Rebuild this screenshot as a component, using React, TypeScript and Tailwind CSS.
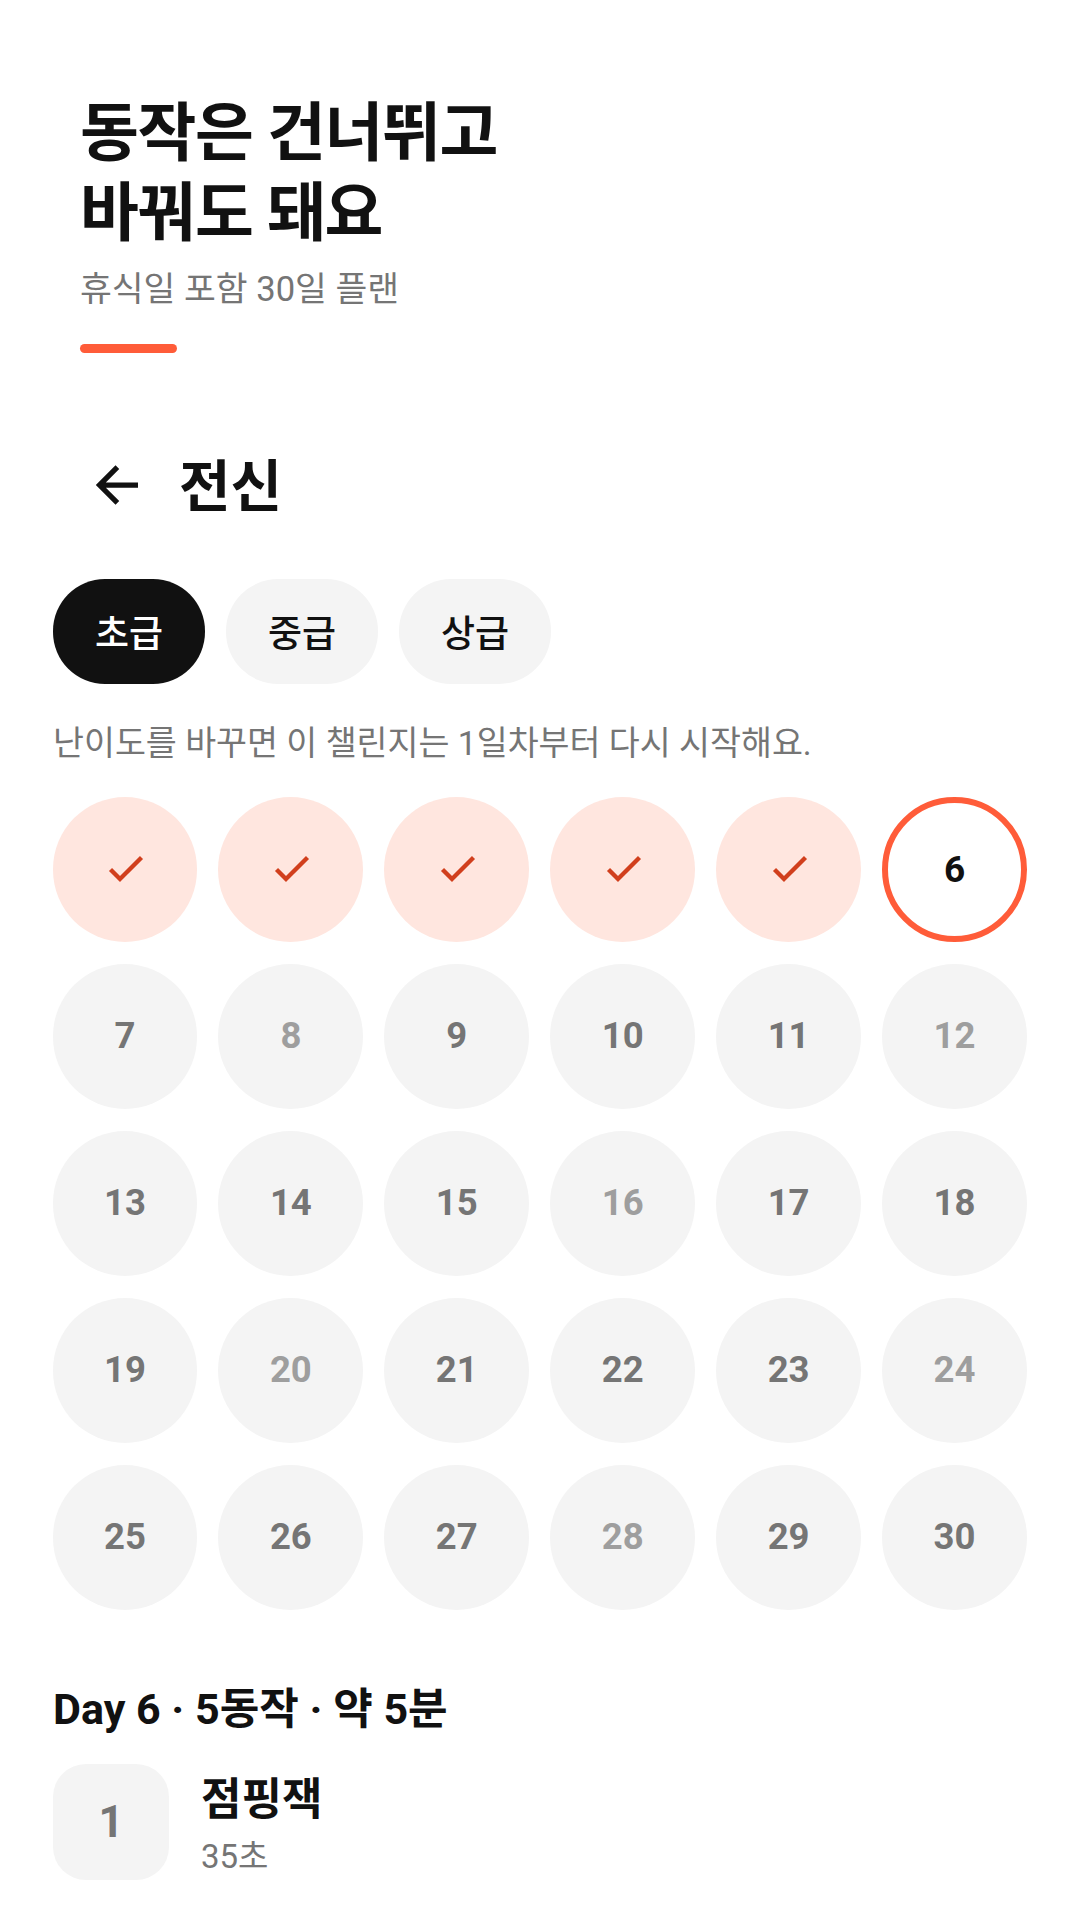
const FONT = "font-['Roboto','Noto_Sans_CJK_KR',sans-serif]";

const muted = new Set([8, 12, 16, 20, 24, 28]);

function DayCell({ day }: { day: number }) {
  if (day <= 5) {
    return (
      <div className="flex aspect-square w-full items-center justify-center rounded-full bg-[#ffe6df]">
        <svg width="44" height="44" viewBox="0 0 44 44" fill="none">
          <path d="M7.5 22.5 L17 32 L38.5 10.5" stroke="#d13f1d" strokeWidth="4.3" />
        </svg>
      </div>
    );
  }
  if (day === 6) {
    return (
      <div className="flex aspect-square w-full items-center justify-center rounded-full border-[6px] border-[#ff5c39] bg-white text-[37px] font-bold text-[#111111]">
        6
      </div>
    );
  }
  return (
    <div
      className={
        muted.has(day)
          ? "flex aspect-square w-full items-center justify-center rounded-full bg-[#f4f4f4] text-[36.5px] font-bold text-[#9e9e9e]"
          : "flex aspect-square w-full items-center justify-center rounded-full bg-[#f4f4f4] text-[36.5px] font-bold text-[#757575]"
      }
    >
      {day}
    </div>
  );
}

function Pill({ label, active }: { label: string; active?: boolean }) {
  return (
    <div
      className={
        active
          ? "flex h-[105px] w-[152px] items-center justify-center rounded-[52px] bg-[#111111] pt-[7px] text-[37px] font-medium text-white"
          : "flex h-[105px] w-[152px] items-center justify-center rounded-[52px] bg-[#f4f4f4] pt-[7px] text-[37px] font-medium text-[#111111]"
      }
    >
      {label}
    </div>
  );
}

export default function App() {
  const days = Array.from({ length: 30 }, (_, i) => i + 1);
  return (
    <div className={`${FONT} h-[1920px] w-[1080px] overflow-hidden bg-white`}>
      <header className="px-[80px] pt-[94px]">
        <h1 className="text-[64px] font-bold leading-[80px] tracking-[-1.4px] text-[#111111]">
          동작은 건너뛰고
          <br />
          바꿔도 돼요
        </h1>
        <p className="mt-[13px] text-[34.6px] leading-[44px] text-[#757575]">휴식일 포함 30일 플랜</p>
        <div className="mt-[33px] h-[9px] w-[97px] rounded-full bg-[#ff5c39]" />
      </header>

      <div className="mt-[94px] flex h-[80px] items-center pl-[83px]">
        <svg width="66" height="66" viewBox="0 0.7 24 24" fill="none" stroke="#111111" strokeWidth="1.9">
          <path d="M20 12H6M12.5 5.5 6 12l6.5 6.5" />
        </svg>
        <h2 className="ml-[30px] text-[56px] font-bold leading-[80px] text-[#111111]">전신</h2>
      </div>

      <div className="mt-[52px] px-[53px]">
        <div className="flex gap-[21px]">
          <Pill label="초급" active />
          <Pill label="중급" />
          <Pill label="상급" />
        </div>
        <p className="mt-[38px] text-[33.65px] leading-[44px] text-[#757575]">
          난이도를 바꾸면 이 챌린지는 1일차부터 다시 시작해요.
        </p>
        <div className="ml-[-0.5px] mt-[31px] grid grid-cols-6 gap-x-[21px] gap-y-[22px]">
          {days.map((d) => (
            <DayCell key={d} day={d} />
          ))}
        </div>
        <h3 className="mt-[71px] text-[43px] font-bold leading-[56px] text-[#111111]">Day 6 · 5동작 · 약 5분</h3>
        <div className="mt-[27px] flex items-center">
          <div className="flex h-[116px] w-[116px] items-center justify-center rounded-[33px] bg-[#f4f4f4] text-[44px] font-bold text-[#757575]">
            1
          </div>
          <div className="ml-[32px] pt-[6px]">
            <div className="text-[44px] font-bold leading-[60px] text-[#111111]">점핑잭</div>
            <div className="mt-[5px] text-[33px] leading-[44px] text-[#757575]">35초</div>
          </div>
        </div>
      </div>
    </div>
  );
}
